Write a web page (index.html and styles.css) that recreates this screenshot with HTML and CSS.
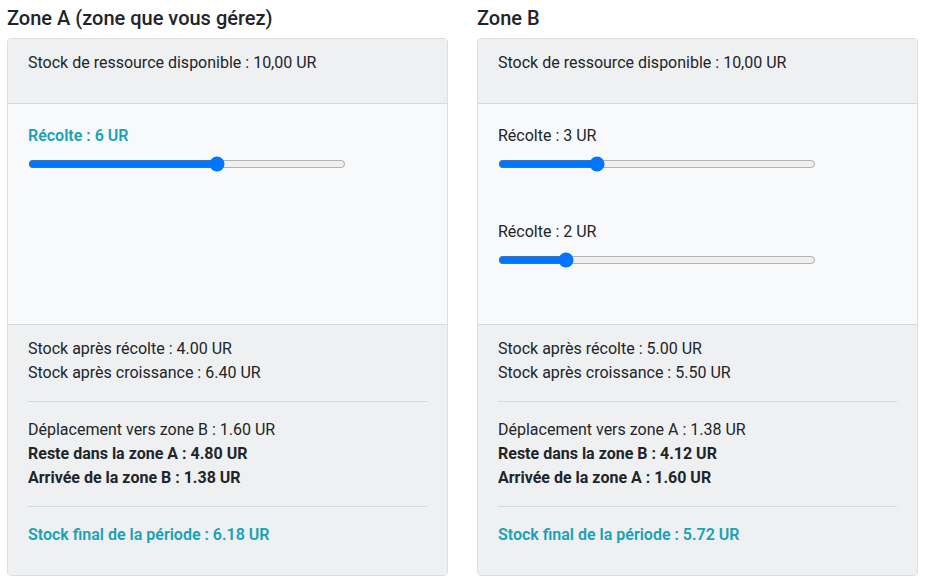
FILE: index.html
```html
<!DOCTYPE html>
<html lang="fr">
<head>
<meta charset="utf-8">
<link rel="stylesheet" href="styles.css">
</head>
<body>
<div class="zones">
  <section class="zone">
    <h5 class="zone-title">Zone A (zone que vous gérez)</h5>
    <div class="card">
      <div class="card-top">
        <p>Stock de ressource disponible : 10,00 UR</p>
      </div>
      <div class="card-mid">
        <div class="harvest">
          <label class="harvest-label active">Récolte : 6 UR</label>
          <input class="slider" type="range" min="0" max="10" step="1" value="6">
        </div>
      </div>
      <div class="card-bottom">
        <p>Stock après récolte : 4.00 UR<br>Stock après croissance : 6.40 UR</p>
        <hr>
        <p>Déplacement vers zone B : 1.60 UR<br><strong>Reste dans la zone A : 4.80 UR</strong><br><strong>Arrivée de la zone B : 1.38 UR</strong></p>
        <hr>
        <p class="final">Stock final de la période : 6.18 UR</p>
      </div>
    </div>
  </section>
  <section class="zone">
    <h5 class="zone-title">Zone B</h5>
    <div class="card">
      <div class="card-top">
        <p>Stock de ressource disponible : 10,00 UR</p>
      </div>
      <div class="card-mid">
        <div class="harvest">
          <label class="harvest-label">Récolte : 3 UR</label>
          <input class="slider" type="range" min="0" max="10" step="1" value="3">
        </div>
        <div class="harvest">
          <label class="harvest-label">Récolte : 2 UR</label>
          <input class="slider" type="range" min="0" max="10" step="1" value="2">
        </div>
      </div>
      <div class="card-bottom">
        <p>Stock après récolte : 5.00 UR<br>Stock après croissance : 5.50 UR</p>
        <hr>
        <p>Déplacement vers zone A : 1.38 UR<br><strong>Reste dans la zone B : 4.12 UR</strong><br><strong>Arrivée de la zone A : 1.60 UR</strong></p>
        <hr>
        <p class="final">Stock final de la période : 5.72 UR</p>
      </div>
    </div>
  </section>
</div>
</body>
</html>
```
FILE: styles.css
```css
* { box-sizing: border-box; }
html, body { margin: 0; background: #fff; }
body {
  font-family: Roboto, "Noto Sans", sans-serif;
  font-size: 16px;
  line-height: 1.5;
  color: #212529;
  padding: 6px 0 0 7px;
}
.zones {
  display: grid;
  grid-template-columns: 441px 441px;
  column-gap: 29px;
}
.zone-title {
  margin: 0 0 8px;
  font-size: 20px;
  font-weight: 500;
  line-height: 1.2;
}
.card {
  border: 1px solid #dcdee0;
  border-radius: 4px;
  overflow: hidden;
}
.card p { margin: 0 0 16px; }
.card-top {
  background: #eff0f2;
  padding: 12px 20px;
  border-bottom: 1px solid #d7d9dc;
}
.card-mid {
  background: #f8f9fa;
  padding: 20px 20px 0;
  height: 220px;
}
.card-bottom {
  background: #eff0f2;
  padding: 12px 20px;
  border-top: 1px solid #d7d9dc;
}
.harvest { height: 96px; }
.harvest-label { display: block; }
.harvest-label.active { color: #17a2b8; font-weight: 600; }
.slider {
  display: block;
  width: 318px;
  margin: 8px 0 0 0;
}
hr {
  border: 0;
  border-top: 1px solid #d6d8db;
  margin: 0 0 16px;
}
strong { font-weight: 700; }
.final { color: #17a2b8; font-weight: 600; }
```
